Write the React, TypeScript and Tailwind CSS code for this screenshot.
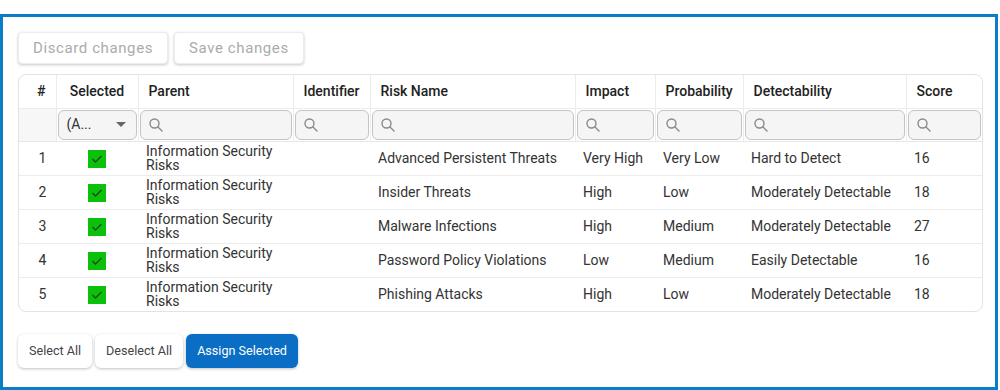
import React from 'react'

const rows = [
  { n: 1, risk: 'Advanced Persistent Threats', impact: 'Very High', prob: 'Very Low', det: 'Hard to Detect', score: 16 },
  { n: 2, risk: 'Insider Threats', impact: 'High', prob: 'Low', det: 'Moderately Detectable', score: 18 },
  { n: 3, risk: 'Malware Infections', impact: 'High', prob: 'Medium', det: 'Moderately Detectable', score: 27 },
  { n: 4, risk: 'Password Policy Violations', impact: 'Low', prob: 'Medium', det: 'Easily Detectable', score: 16 },
  { n: 5, risk: 'Phishing Attacks', impact: 'High', prob: 'Low', det: 'Moderately Detectable', score: 18 },
]

const widths = [37, 82, 155, 77, 205, 80, 88, 163, 76]

function SearchIcon() {
  return (
    <svg width="16" height="16" viewBox="0 0 16 16" fill="none" stroke="#8a8a8a" strokeWidth="1.4">
      <circle cx="6.5" cy="6.5" r="4.5" />
      <path d="M10 10l4 4" strokeLinecap="round" />
    </svg>
  )
}

function SearchBox() {
  return (
    <div className="h-[30px] mx-[1px] rounded-md border border-[#c4c4c4] bg-[#f5f5f5] flex items-center pl-[7px]">
      <SearchIcon />
    </div>
  )
}

function Check() {
  return (
    <span className="inline-flex w-[18px] h-[18px] bg-[#0cc10c] items-center justify-center align-middle">
      <svg width="12" height="10" viewBox="0 0 12 10" fill="none" stroke="#1a4d1a" strokeWidth="1.4">
        <path d="M1.5 5l3 3L10.5 2" />
      </svg>
    </span>
  )
}

export default function App() {
  const headers = ['#', 'Selected', 'Parent', 'Identifier', 'Risk Name', 'Impact', 'Probability', 'Detectability', 'Score']
  return (
    <div className="w-[1000px] h-[390px] bg-white pt-[14px]" style={{ fontFamily: 'Roboto, "Liberation Sans", sans-serif' }}>
      <div className="h-[376px] w-[998px] border-[3px] border-[#0a7dc6] px-[15px] pt-[15px]">
        <div className="flex gap-[6px]">
          <button className="h-[32px] px-[14px] rounded bg-white text-[15px] tracking-[0.6px] text-[#ababab] shadow-[0_1px_3px_rgba(0,0,0,0.22)] border border-[#ececec]">
            Discard changes
          </button>
          <button className="h-[32px] px-[14px] rounded bg-white text-[15px] tracking-[0.6px] text-[#ababab] shadow-[0_1px_3px_rgba(0,0,0,0.22)] border border-[#ececec]">
            Save changes
          </button>
        </div>

        <div className="mt-[10px] w-[965px] rounded-lg border border-[#e3e3e3] overflow-hidden">
          <table className="table-fixed w-full border-collapse text-[14px] text-[#333]">
            <colgroup>
              {widths.map((w, i) => (
                <col key={i} style={{ width: w }} />
              ))}
            </colgroup>
            <thead>
              <tr className="border-b border-[#ececec]">
                {headers.map((h, i) => (
                  <th
                    key={h}
                    className={
                      'h-[33px] font-medium text-[#222] border-l border-[#ececec] first:border-l-0 ' +
                      (i === 0 ? 'text-center pl-[8px]' : i === 1 ? 'text-center' : 'text-left pl-[10px]')
                    }
                  >
                    {h}
                  </th>
                ))}
              </tr>
              <tr className="border-b border-[#e6e6e6]">
                <td className="h-[33px] bg-[#f7f7f7]"></td>
                <td className="h-[33px] px-[1px] border-l border-[#ececec]">
                  <div className="h-[30px] rounded-md border border-[#c4c4c4] bg-[#f5f5f5] flex items-center pl-[8px] pr-[10px] justify-between">
                    <span className="text-[14px] text-[#333]">(A...</span>
                    <svg width="10" height="6" viewBox="0 0 10 6">
                      <path d="M0 0h10L5 5z" fill="#666" />
                    </svg>
                  </div>
                </td>
                {widths.slice(2).map((_, i) => (
                  <td key={i} className="h-[33px] border-l border-[#ececec]">
                    <SearchBox />
                  </td>
                ))}
              </tr>
            </thead>
            <tbody>
              {rows.map((r, i) => (
                <tr key={r.n} className={i < rows.length - 1 ? 'border-b border-[#ececec]' : ''}>
                  <td className="h-[34px] text-center pl-[10px]">{r.n}</td>
                  <td className="text-center">
                    <Check />
                  </td>
                  <td className="pl-[8px] leading-[14px]">
                    Information Security
                    <br />
                    Risks
                  </td>
                  <td></td>
                  <td className="pl-[8px]">{r.risk}</td>
                  <td className="pl-[8px]">{r.impact}</td>
                  <td className="pl-[8px]">{r.prob}</td>
                  <td className="pl-[8px]">{r.det}</td>
                  <td className="pl-[8px]">{r.score}</td>
                </tr>
              ))}
            </tbody>
          </table>
        </div>

        <div className="flex gap-[3px] mt-[22px]">
          <button className="h-[34px] px-[11px] rounded-md bg-white text-[12.6px] text-[#444] shadow-[0_1px_3px_rgba(0,0,0,0.25)]">
            Select All
          </button>
          <button className="h-[34px] px-[11px] rounded-md bg-white text-[12.6px] text-[#444] shadow-[0_1px_3px_rgba(0,0,0,0.25)]">
            Deselect All
          </button>
          <button className="h-[34px] px-[11px] rounded-md bg-[#0a6ec4] text-[12.6px] text-white shadow-[0_1px_3px_rgba(0,0,0,0.25)]">
            Assign Selected
          </button>
        </div>
      </div>
    </div>
  )
}
